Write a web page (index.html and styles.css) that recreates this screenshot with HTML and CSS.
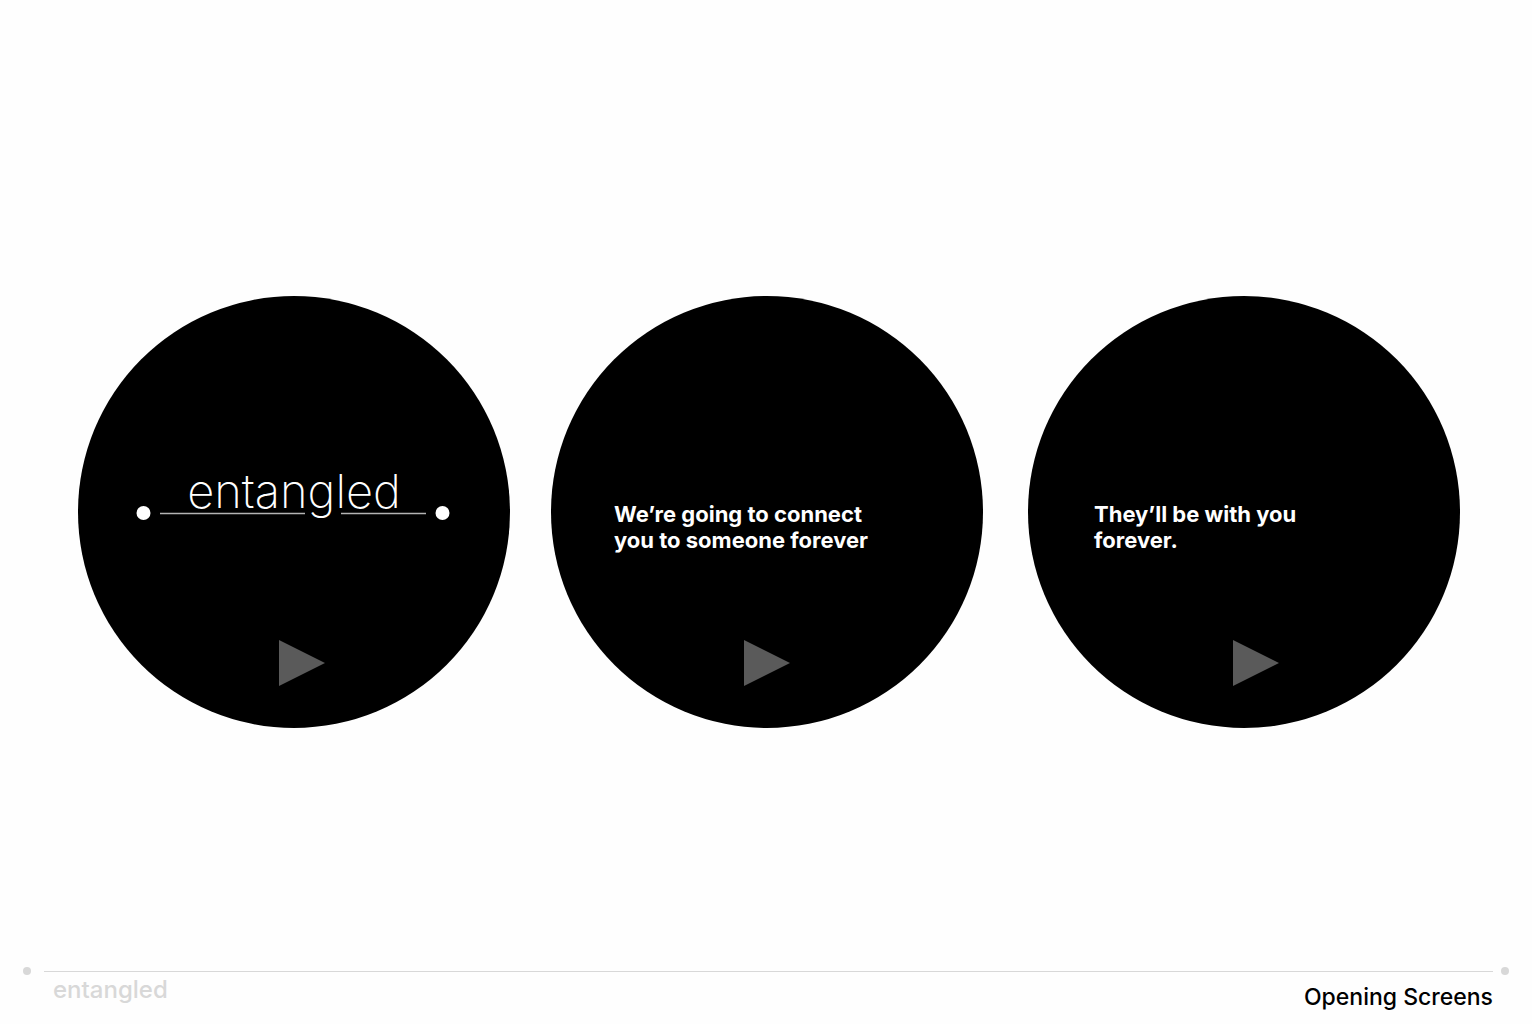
FILE: index.html
```html
<!DOCTYPE html>
<html lang="en">
<head>
<meta charset="utf-8">
<meta name="viewport" content="width=device-width, initial-scale=1">
<title>entangled – Opening Screens</title>
<link rel="stylesheet" href="styles.css">
</head>
<body>
<main class="screens">
  <section class="screen screen-intro">
    <div class="screen-body logo">
      <svg class="logo-line" viewBox="0 0 314 14" aria-hidden="true">
        <circle cx="6.5" cy="7" r="7" fill="#fff"/>
        <path d="M23 7.5H168M204 7.5H289" stroke="#b4b4b4" stroke-width="1.4"/>
        <circle cx="305.5" cy="7" r="7" fill="#fff"/>
      </svg>
      <h1 class="logo-name">entangled</h1>
    </div>
    <button class="play" type="button" aria-label="Next"><svg viewBox="0 0 46 46" aria-hidden="true"><path d="M0 0L46 23L0 46Z"/></svg></button>
  </section>
  <section class="screen screen-connect">
    <p class="screen-body message">We’re going to connect<br>you to someone forever</p>
    <button class="play" type="button" aria-label="Next"><svg viewBox="0 0 46 46" aria-hidden="true"><path d="M0 0L46 23L0 46Z"/></svg></button>
  </section>
  <section class="screen screen-forever">
    <p class="screen-body message">They’ll be with you<br>forever.</p>
    <button class="play" type="button" aria-label="Next"><svg viewBox="0 0 46 46" aria-hidden="true"><path d="M0 0L46 23L0 46Z"/></svg></button>
  </section>
</main>
<footer class="footer">
  <div class="rule"><span class="dot"></span><span class="line"></span><span class="dot"></span></div>
  <div class="captions">
    <span class="brand">entangled</span>
    <h2 class="caption">Opening Screens</h2>
  </div>
</footer>
</body>
</html>
```
FILE: styles.css
```css
* { box-sizing: border-box; }

body {
  margin: 0;
  min-height: 100vh;
  display: flex;
  flex-direction: column;
  background: #fefefe;
  color: #000;
  font-family: Inter, "Open Sans", sans-serif;
}

h1, h2, p { margin: 0; }

.screens {
  flex: 1;
  display: flex;
  justify-content: space-between;
  align-items: center;
  padding: 57px 72px 0 78px;
}

.screen {
  flex: 0 1 432px;
  aspect-ratio: 1;
  display: flex;
  flex-direction: column;
  border-radius: 50%;
  background: #000;
  color: #fff;
}

.screen-body {
  height: 344px;
}

.logo {
  display: grid;
  align-content: start;
  justify-items: center;
  padding: 168px 59px 0;
}

.logo-line,
.logo-name { grid-area: 1 / 1; }

.logo-line {
  width: 100%;
  margin-top: 42px;
  overflow: visible;
}

.logo-name {
  font-size: 47px;
  line-height: 54px;
  font-weight: 200;
}

.message {
  padding-top: 205px;
  font-size: 22px;
  line-height: 26px;
  font-weight: 700;
  white-space: nowrap;
}

.play {
  width: 46px;
  height: 46px;
  padding: 0;
  border: 0;
  background: none;
  cursor: pointer;
}

.play svg {
  display: block;
  fill: #5a5a5a;
}

.screen-intro .play { margin-left: 201px; }
.screen-connect { margin-right: 4px; }
.screen-connect .message { padding-left: 63px; }
.screen-connect .play { margin-left: 193px; }
.screen-forever .message { padding-left: 66px; }
.screen-forever .play { margin-left: 205px; }

.footer { padding: 0 23px; }

.rule {
  display: flex;
  align-items: center;
}

.dot {
  width: 8px;
  height: 8px;
  border-radius: 50%;
  background: #d8d8d8;
}

.line {
  flex: 1;
  height: 1px;
  margin: 0 8px 0 13px;
  background: #d8d8d8;
}

.captions {
  display: flex;
  justify-content: space-between;
  padding: 0 16px 0 30px;
}

.brand {
  color: #d8d8d8;
  font-size: 24px;
  line-height: 30px;
  font-weight: 500;
}

.caption {
  padding-top: 7px;
  font-size: 23px;
  line-height: 30px;
  font-weight: 500;
  margin-bottom: 12px;
}
```
